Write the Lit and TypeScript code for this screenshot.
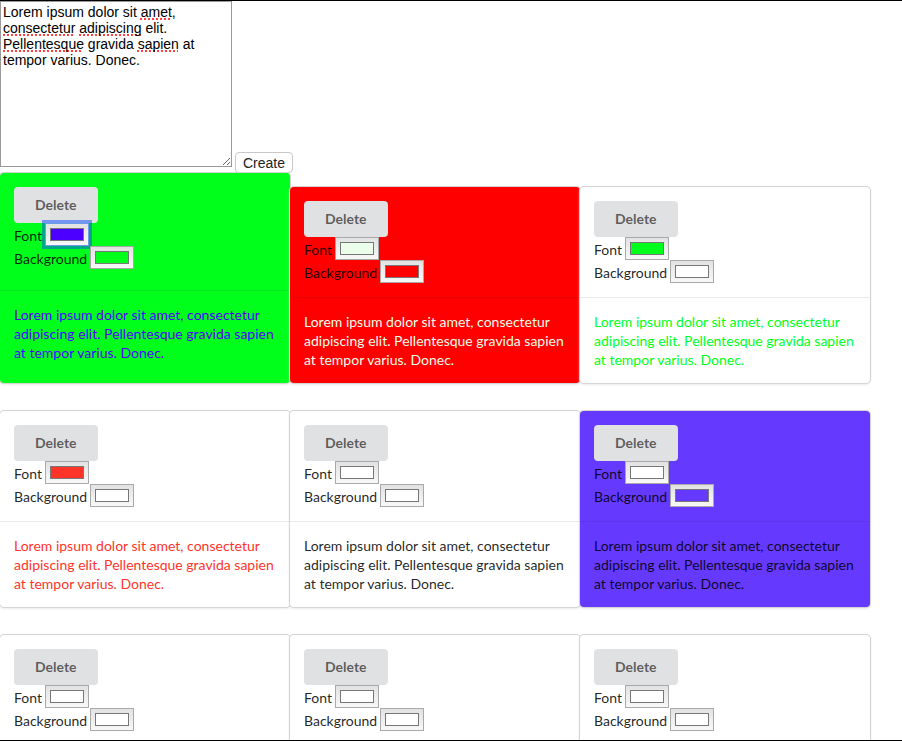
import { LitElement, html, css } from "lit";
import { customElement, property, state } from "lit/decorators.js";
import { classMap } from "lit/directives/class-map.js";
import { styleMap } from "lit/directives/style-map.js";

interface Note {
  id: number;
  text: string;
  font?: string;
  background?: string;
  tall?: boolean;
}

const LOREM =
  "Lorem ipsum dolor sit amet, consectetur adipiscing elit. Pellentesque gravida sapien at tempor varius. Donec.";

const UNKNOWN_WORDS = /(amet|consectetur|adipiscing|Pellentesque|sapien)/;

@customElement("note-card")
class NoteCard extends LitElement {
  @property({ attribute: false }) note!: Note;

  static styles = css`
    :host {
      display: flex;
      width: 290px;
    }
    .card {
      flex: 1;
      display: flex;
      flex-direction: column;
      background: #fff;
      border-radius: 4px;
      box-shadow: 0 1px 3px 0 #d4d4d5, 0 0 0 1px #d4d4d5;
      color: rgba(0, 0, 0, 0.87);
      font: 14px/19px Lato, sans-serif;
    }
    .card.tall {
      min-height: 210px;
    }
    .content {
      flex: 1 0 auto;
      padding: 14px;
    }
    .text {
      border-top: 1px solid rgba(34, 36, 38, 0.1);
    }
    .text p {
      margin: 0;
    }
    .delete {
      display: block;
      height: 36px;
      padding: 0 21px;
      border: 0;
      border-radius: 4px;
      background: #e0e1e2;
      color: rgba(0, 0, 0, 0.6);
      font: bold 14px/14px Lato, sans-serif;
      cursor: pointer;
    }
    .field {
      display: flex;
      align-items: flex-end;
      gap: 3px;
      height: 23px;
      line-height: 21px;
    }
    .swatch {
      appearance: none;
      box-sizing: border-box;
      width: 44px;
      height: 23px;
      margin: 0;
      padding: 4px;
      border: 1px solid #a9a9a9;
      border-radius: 0;
      background: linear-gradient(#e2e2e2, #f8f8f8);
    }
    .swatch::-webkit-color-swatch-wrapper {
      padding: 0;
    }
    .swatch::-webkit-color-swatch {
      border: 1px solid #777;
      border-radius: 0;
    }
    .swatch.active {
      border-color: #6f9ae8;
      outline: 3px solid rgba(0, 70, 250, 0.48);
    }
  `;

  render() {
    const { id, text, font, background, tall } = this.note;
    return html`
      <article
        class=${classMap({ card: true, tall: !!tall })}
        style=${styleMap({ background })}
      >
        <div class="content">
          <button class="delete" type="button" @click=${this.remove_}>Delete</button>
          <div class="field">
            <label for="font">Font</label>
            <input
              class=${classMap({ swatch: true, active: id === 1 })}
              id="font"
              type="color"
              .value=${font ?? "#ffffff"}
              @input=${(e: Event) => this.change({ font: (e.target as HTMLInputElement).value })}
            />
          </div>
          <div class="field">
            <label for="background">Background</label>
            <input
              class="swatch"
              id="background"
              type="color"
              .value=${background ?? "#ffffff"}
              @input=${(e: Event) => this.change({ background: (e.target as HTMLInputElement).value })}
            />
          </div>
        </div>
        <div class="content text"><p style=${styleMap({ color: font })}>${text}</p></div>
      </article>
    `;
  }

  private remove_() {
    this.dispatchEvent(new CustomEvent("note-delete", { detail: this.note.id }));
  }

  private change(patch: Partial<Note>) {
    this.dispatchEvent(
      new CustomEvent("note-change", { detail: { ...this.note, ...patch } })
    );
  }
}

@customElement("app-root")
class AppRoot extends LitElement {
  @state() private draft = LOREM;
  @state() private notes: Note[] = [
    { id: 1, text: LOREM, font: "#4c00ff", background: "#00ff1a", tall: true },
    { id: 2, text: LOREM, font: "#ebffeb", background: "#ff0000" },
    { id: 3, text: LOREM, font: "#00ff1a" },
    { id: 4, text: LOREM, font: "#ff3429" },
    { id: 5, text: LOREM },
    { id: 6, text: LOREM, background: "#6639ff" },
    { id: 7, text: LOREM },
    { id: 8, text: LOREM },
    { id: 9, text: LOREM },
  ];

  static styles = css`
    :host {
      display: block;
      box-sizing: border-box;
      height: 100vh;
      overflow: hidden;
      border: solid #000;
      border-width: 1px 0;
      background: #fff;
    }
    .composer {
      display: flex;
      align-items: flex-end;
      gap: 3px;
    }
    .editor {
      display: grid;
      width: 232px;
      height: 166px;
      margin-bottom: 6px;
    }
    .draft,
    .spelling {
      grid-area: 1 / 1;
      box-sizing: border-box;
      width: 100%;
      height: 100%;
      margin: 0;
      padding: 2px;
      border: 1px solid #999;
      border-radius: 0;
      font: 14px/16px "Liberation Sans", Arial, sans-serif;
      white-space: pre-wrap;
    }
    .draft {
      background: transparent;
      color: #000;
      outline: 0;
    }
    .spelling {
      overflow: hidden;
      color: transparent;
    }
    .unknown {
      text-decoration: underline dotted #ff4040 2px;
      text-decoration-skip-ink: none;
      text-underline-offset: 1px;
    }
    .create {
      height: 21px;
      padding: 0 7px;
      border: 1px solid #c8c8c8;
      border-radius: 4px;
      background: #fff;
      color: #222;
      font: 14px/16px "Liberation Sans", Arial, sans-serif;
    }
    .cards {
      display: flex;
      flex-wrap: wrap;
      align-items: flex-end;
      row-gap: 28px;
    }
  `;

  render() {
    return html`
      <div class="composer">
        <div class="editor">
          <div class="spelling" aria-hidden="true">${this.draft
            .split(UNKNOWN_WORDS)
            .map((part, i) => (i % 2 ? html`<span class="unknown">${part}</span>` : part))}</div>
          <textarea
            class="draft"
            aria-label="Note text"
            spellcheck="false"
            .value=${this.draft}
            @input=${(e: Event) => (this.draft = (e.target as HTMLTextAreaElement).value)}
          ></textarea>
        </div>
        <button class="create" type="button" @click=${this.create}>Create</button>
      </div>
      <main class="cards">
        ${this.notes.map(
          (note) => html`<note-card
            .note=${note}
            @note-delete=${this.remove_}
            @note-change=${this.update_}
          ></note-card>`
        )}
      </main>
    `;
  }

  private create() {
    this.notes = [...this.notes, { id: Date.now(), text: this.draft }];
  }

  private remove_(e: CustomEvent<number>) {
    this.notes = this.notes.filter((n) => n.id !== e.detail);
  }

  private update_(e: CustomEvent<Note>) {
    this.notes = this.notes.map((n) => (n.id === e.detail.id ? e.detail : n));
  }
}
